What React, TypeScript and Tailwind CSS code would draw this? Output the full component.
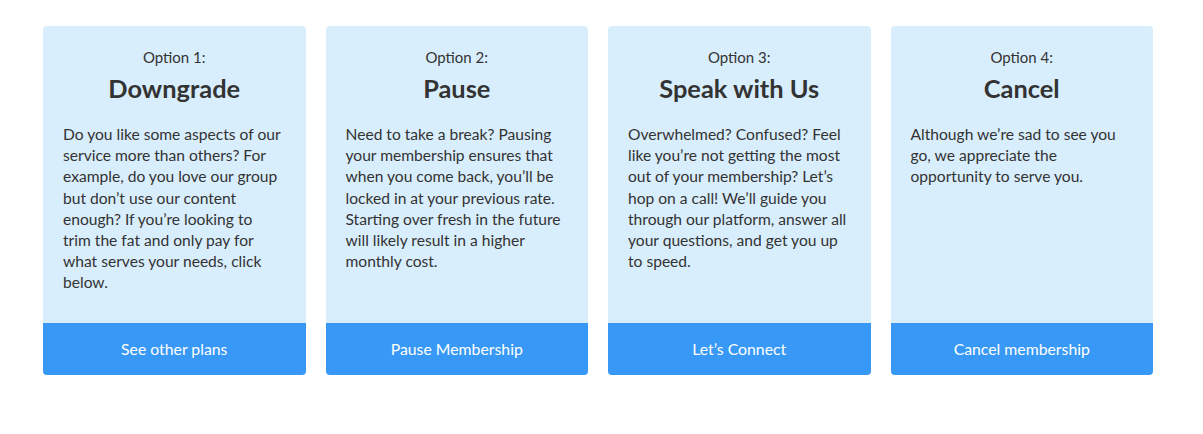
import type { ReactNode } from "react";

const OPTIONS: { label: string; title: string; text: ReactNode; cta: string }[] = [
  {
    label: "Option 1:",
    title: "Downgrade",
    text: (
      <>
        Do you like some aspects of our service more than others? For example, do you love our group but don’t use our
        content enough? If you’re looking to
        <br />
        trim the fat and only pay for what serves your needs, click below.
      </>
    ),
    cta: "See other plans",
  },
  {
    label: "Option 2:",
    title: "Pause",
    text: "Need to take a break? Pausing your membership ensures that when you come back, you’ll be locked in at your previous rate. Starting over fresh in the future will likely result in a higher monthly cost.",
    cta: "Pause Membership",
  },
  {
    label: "Option 3:",
    title: "Speak with Us",
    text: "Overwhelmed? Confused? Feel like you’re not getting the most out of your membership? Let’s hop on a call! We’ll guide you through our platform, answer all your questions, and get you up to speed.",
    cta: "Let’s Connect",
  },
  {
    label: "Option 4:",
    title: "Cancel",
    text: "Although we’re sad to see you go, we appreciate the opportunity to serve you.",
    cta: "Cancel membership",
  },
];

export default function App() {
  return (
    <div className="w-[1203px] h-[434px] bg-white pt-[26px] pl-[43px] font-['Lato','Noto_Sans',sans-serif] text-[#333]">
      <div className="w-[1110px] grid grid-cols-4 gap-[20px]">
        {OPTIONS.map((o) => (
          <div key={o.title} className="flex flex-col rounded-[4px] overflow-hidden bg-[#d9eefd]">
            <div className="px-[20px] pt-[20px] pb-[29px]">
              <p className="text-center text-[15px] leading-[22px]">{o.label}</p>
              <h2 className="text-center text-[25.4px] leading-[32px] font-bold mt-[4px]">{o.title}</h2>
              <p className="mt-[20px] text-[15.6px] leading-[21.2px]">{o.text}</p>
            </div>
            <button className="mt-auto h-[52px] w-full bg-[#3898f5] text-white text-[15.8px]">
              {o.cta}
            </button>
          </div>
        ))}
      </div>
    </div>
  );
}
